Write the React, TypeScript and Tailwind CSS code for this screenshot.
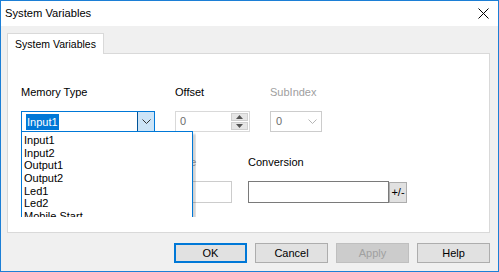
import React from "react";

const items = ["Input1", "Input2", "Output1", "Output2", "Led1", "Led2", "Mobile Start"];

function Chevron({ color = "#000" }: { color?: string }) {
  return (
    <svg width="9" height="5" viewBox="0 0 9 5" fill="none">
      <path d="M0.5 0.5 L4.5 4.5 L8.5 0.5" stroke={color} strokeWidth="1" />
    </svg>
  );
}

export default function App() {
  return (
    <div
      className="w-[499px] h-[272px] border border-[#1c7fd6] bg-[#f0f0f0] flex flex-col text-[11px] text-black overflow-hidden whitespace-nowrap"
      style={{ fontFamily: '"Liberation Sans", Arial, sans-serif' }}
    >
      {/* title bar */}
      <div className="h-[25px] bg-white flex items-center justify-between pl-[4px] pr-[9px]">
        <span className="leading-none text-[11.2px]">System Variables</span>
        <svg width="11" height="11" viewBox="0 0 11 11">
          <path d="M0.5 0.5 L10.5 10.5 M10.5 0.5 L0.5 10.5" stroke="#000" strokeWidth="1" />
        </svg>
      </div>

      <div className="flex-1 flex flex-col pl-[6px] pr-[8px] pt-[7px]">
        {/* tab */}
        <div className="relative z-10 -mb-px h-[21px] w-[97px] bg-white border border-b-0 border-[#d9d9d9] pl-[7px] flex items-center">
          <span className="leading-none text-[10.5px]">System Variables</span>
        </div>

        {/* panel */}
        <div className="relative h-[180px] bg-white border border-[#d9d9d9] pl-[13px] pt-[30px]">
          {/* row 1 labels */}
          <div className="flex h-[16px] items-center">
            <div className="w-[154px]">Memory Type</div>
            <div className="w-[95px]">Offset</div>
            <div className="text-[#a0a0a0]">SubIndex</div>
          </div>
          {/* row 1 controls */}
          <div className="flex mt-[11px] h-[21px]">
            <div className="w-[134px] h-[21px] border border-[#0078d7] flex">
              <div className="flex-1 flex items-center pl-[4px]">
                <span className="bg-[#0078d7] text-white px-[1px] leading-[16px]">Input1</span>
              </div>
              <div className="w-[17px] bg-[#cce4f7] border-l border-[#005499] flex items-center justify-center">
                <Chevron color="#333" />
              </div>
            </div>
            <div className="ml-[20px] w-[75px] h-[21px] border border-[#d9d9d9] flex">
              <div className="flex-1 flex items-center pl-[4px] text-[#6d6d6d]">0</div>
              <div className="w-[18px] flex flex-col gap-px py-px pr-px">
                <div className="flex-1 bg-[#e6e6e6] border border-[#cfcfcf] flex items-center justify-center">
                  <svg width="7" height="4" viewBox="0 0 7 4"><path d="M0 4 L3.5 0 L7 4 Z" fill="#555" /></svg>
                </div>
                <div className="flex-1 bg-[#e6e6e6] border border-[#cfcfcf] flex items-center justify-center">
                  <svg width="7" height="4" viewBox="0 0 7 4"><path d="M0 0 L3.5 4 L7 0 Z" fill="#555" /></svg>
                </div>
              </div>
            </div>
            <div className="ml-[20px] w-[52px] h-[21px] border border-[#cccccc] flex items-center pl-[5px] pr-[4px] justify-between">
              <span className="text-[#6d6d6d]">0</span>
              <Chevron color="#b5b5b5" />
            </div>
          </div>

          {/* row 2 labels */}
          <div className="flex mt-[22px] h-[16px] items-center">
            <div className="ml-[154px] w-[73px] text-[#a0a0a0]">Size</div>
            <div>Conversion</div>
          </div>
          {/* row 2 controls */}
          <div className="flex mt-[11px] h-[22px] items-start">
            <div className="ml-[154px] w-[57px] h-[22px] border border-[#cccccc]" />
            <div className="ml-[16px] w-[141px] h-[22px] border border-[#7a7a7a]" />
            <div className="w-[18px] h-[21px] mt-px bg-[#e1e1e1] border border-[#adadad] flex items-center justify-center leading-none">+/-</div>
          </div>

          {/* dropdown list */}
          <div className="absolute left-[13px] top-[77px] w-[175px] h-[86px] overflow-hidden">
            <div className="w-[172px] h-[92px] bg-white border border-[#0078d7] pl-[1px] pt-[2px] shadow-[3px_3px_2px_rgba(0,0,0,0.18)]">
              {items.map((it) => (
                <div key={it} className="h-[12.7px] leading-[12.7px] pl-[1px]">{it}</div>
              ))}
            </div>
          </div>
        </div>

        {/* buttons */}
        <div className="flex justify-end gap-[8px] mt-[10px]">
          <button className="w-[73px] h-[20px] bg-[#e1e1e1] border-2 border-[#0078d7] leading-none">OK</button>
          <button className="w-[73px] h-[20px] bg-[#e1e1e1] border border-[#adadad] leading-none">Cancel</button>
          <button className="w-[73px] h-[20px] bg-[#cccccc] border border-[#bfbfbf] text-[#a0a0a0] leading-none">Apply</button>
          <button className="w-[73px] h-[20px] bg-[#e1e1e1] border border-[#adadad] leading-none">Help</button>
        </div>
      </div>
    </div>
  );
}
